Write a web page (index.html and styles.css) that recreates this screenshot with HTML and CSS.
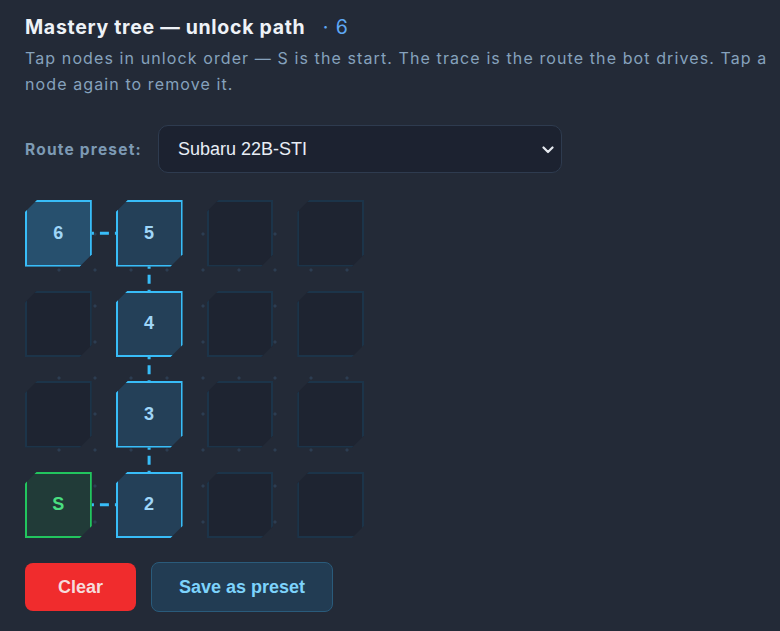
FILE: index.html
```html
<!DOCTYPE html>
<html>
<head>
<meta charset="utf-8">
<link rel="stylesheet" href="styles.css">
</head>
<body>
<div class="panel">
  <h2 class="title">Mastery tree — unlock path <span class="count">· 6</span></h2>
  <p class="desc">Tap nodes in unlock order — S is the start. The trace is the route the bot drives. Tap a node again to remove it.</p>

  <div class="preset-row">
    <label class="preset-label" for="preset">Route preset:</label>
    <div class="select-wrap">
      <select id="preset" class="select">
        <option>Subaru 22B-STI</option>
      </select>
      <svg class="chev" width="12" height="8" viewBox="0 0 12 8"><path d="M1.5 1.5 L6 6 L10.5 1.5" fill="none" stroke="#e5e9ef" stroke-width="2.2" stroke-linecap="round" stroke-linejoin="round"/></svg>
    </div>
  </div>

  <div class="board">
    <svg class="trace" width="339" height="338" viewBox="0 0 339 338">
      <g stroke="#38bdf8" stroke-width="3" stroke-dasharray="9 6" stroke-dashoffset="3.5" fill="none">
        <line x1="33.4" y1="33.2" x2="124.1" y2="33.2"/>
        <line x1="124.1" y1="33.2" x2="124.1" y2="123.8"/>
        <line x1="124.1" y1="123.8" x2="124.1" y2="214.3"/>
        <line x1="124.1" y1="214.3" x2="124.1" y2="304.8"/>
        <line x1="33.4" y1="304.8" x2="124.1" y2="304.8"/>
      </g>
    </svg>
    <div class="grid">
      <button class="node on last">6</button>
      <button class="node on">5</button>
      <button class="node"></button>
      <button class="node"></button>

      <button class="node"></button>
      <button class="node on">4</button>
      <button class="node"></button>
      <button class="node"></button>

      <button class="node"></button>
      <button class="node on">3</button>
      <button class="node"></button>
      <button class="node"></button>

      <button class="node start">S</button>
      <button class="node on">2</button>
      <button class="node"></button>
      <button class="node"></button>
    </div>
  </div>

  <div class="actions">
    <button class="btn btn-clear">Clear</button>
    <button class="btn btn-save">Save as preset</button>
  </div>
</div>
</body>
</html>
```
FILE: styles.css
```css
html, body {
  margin: 0;
  padding: 0;
  background: #232a37;
}

.panel {
  padding: 14px 6px 20px 25px;
  font-family: Inter, "Open Sans", sans-serif;
}

.title {
  margin: 0;
  font-size: 19.5px;
  line-height: 26px;
  font-weight: 700;
  letter-spacing: 0.7px;
  color: #eef2f7;
}

.count {
  margin-left: 12px;
  font-weight: 400;
  letter-spacing: 1px;
  color: #5ea8f4;
}

.desc {
  margin: 5px 0 0 0;
  font-size: 16px;
  line-height: 26px;
  color: #86a2bd;
  letter-spacing: 1.1px;
}

.preset-row {
  display: flex;
  align-items: center;
  gap: 16px;
  margin-top: 28px;
}

.preset-label {
  font-family: Inter, sans-serif;
  font-size: 15.5px;
  font-weight: 700;
  letter-spacing: 1.2px;
  color: #7d9ab4;
}

.select-wrap {
  position: relative;
  width: 404px;
}

.select {
  appearance: none;
  -webkit-appearance: none;
  display: block;
  width: 100%;
  height: 48px;
  padding: 0 40px 0 19px;
  background: #1c2230;
  border: 1px solid #2e3b4f;
  border-radius: 10px;
  color: #e8eef6;
  font-family: "Liberation Sans", Arial, sans-serif;
  font-size: 18px;
  outline: none;
}

.chev {
  position: absolute;
  right: 8px;
  top: 21px;
  pointer-events: none;
}

.board {
  position: relative;
  width: 339px;
  height: 338px;
  margin-top: 27px;
  background-image: radial-gradient(circle at 2px 2px, #2c3d52 1.3px, transparent 1.8px);
  background-size: 36px 36px;
  background-position: -4px -4px;
}

.trace {
  position: absolute;
  left: 0;
  top: 0;
}

.grid {
  position: relative;
  display: grid;
  grid-template-columns: repeat(4, 66.75px);
  grid-template-rows: repeat(4, 66.5px);
  gap: 24px;
}

.node {
  margin: 0;
  padding: 0;
  box-sizing: border-box;
  border: 2px solid #1c3449;
  background: #1e2431;
  clip-path: polygon(12px 0, 100% 0, 100% calc(100% - 12px), calc(100% - 12px) 100%, 0 100%, 0 12px);
  font-family: "Liberation Sans", Arial, sans-serif;
  font-weight: 700;
  font-size: 18px;
  color: #9fd6f8;
  cursor: pointer;
}

.node.on {
  border-color: #38bdf8;
  background: #244058;
}

.node.last {
  background: #27506e;
}

.node.start {
  border-color: #22c55e;
  background: #213b38;
  color: #4ade80;
}

.actions {
  display: flex;
  gap: 15px;
  margin-top: 25px;
}

.btn {
  height: 48px;
  border-radius: 8px;
  font-family: "Liberation Sans", Arial, sans-serif;
  font-weight: 700;
  font-size: 18px;
  cursor: pointer;
}

.btn-clear {
  width: 111px;
  border: none;
  background: #f02c2d;
  color: #f6dcdc;
}

.btn-save {
  width: 182px;
  height: 50px;
  margin-top: -1px;
  border: 1px solid #2a5b7b;
  background: #223c53;
  color: #7dd3fc;
}
```
